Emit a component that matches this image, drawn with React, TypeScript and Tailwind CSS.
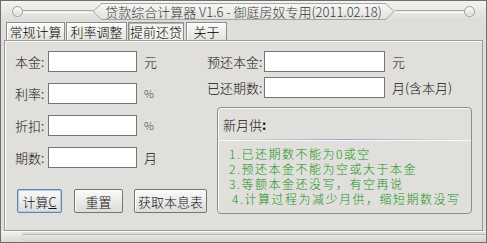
import React from "react";

const font = "font-['Noto_Sans_CJK_SC','Noto_Sans',sans-serif]";

function Circle() {
  return (
    <div className="w-[11px] h-[11px] rounded-full border border-[#9c9c9c] bg-gradient-to-b from-[#ffffff] to-[#d6d6d3] shrink-0 shadow-[inset_0_0_0_1px_#f4f4f4]" />
  );
}

function TitleLine() {
  return <div className="flex-1 h-[3px] border-t border-t-[#a9a9a6] border-b border-b-[#fbfbfa]" />;
}

function Tab({ label, w, active }: { label: string; w: string; active?: boolean }) {
  return (
    <div
      className={
        "h-[18px] border border-[#8c8c8a] border-b-0 flex items-center justify-center text-[13px] leading-none text-black " +
        w +
        (active
          ? " bg-[#f1f1ef] shadow-[inset_1px_1px_0_#b9b9b6]"
          : " bg-gradient-to-b from-[#fbfbfa] to-[#e2e1dd] shadow-[inset_1px_1px_0_#ffffff]")
      }
    >
      {label}
    </div>
  );
}

function Field({ label, unit, unitClass }: { label: string; unit: string; unitClass?: string }) {
  return (
    <div className="h-[21px] flex items-center">
      <div className="w-[33px] text-[13px] leading-none">{label}</div>
      <div className="w-[89px] h-[21px] bg-white border border-[#767676]" />
      <div className={"ml-[7px] leading-none " + (unitClass ?? "text-[13px]")}>{unit}</div>
    </div>
  );
}

function RField({ label, unit }: { label: string; unit: string }) {
  return (
    <div className="h-[21px] flex items-center">
      <div className="w-[57px] text-[13px] leading-none whitespace-nowrap">{label}</div>
      <div className="w-[121px] h-[21px] bg-white border border-[#767676]" />
      <div className="ml-[7px] text-[13px] leading-none whitespace-nowrap">{unit}</div>
    </div>
  );
}

function Btn({ children, w, focus }: { children: React.ReactNode; w: string; focus?: boolean }) {
  return (
    <div
      className={
        "h-[24px] rounded-[2px] border flex items-center justify-center text-[13px] leading-none bg-gradient-to-b from-[#fafafa] to-[#dcdcda] " +
        w +
        (focus
          ? " border-[#5f84ad] shadow-[inset_0_0_0_1px_#b5cce4]"
          : " border-[#747474] shadow-[inset_1px_1px_0_#ffffff]")
      }
    >
      {children}
    </div>
  );
}

export default function App() {
  return (
    <div
      className={
        "w-[487px] h-[243px] overflow-hidden bg-[#dfdedb] flex flex-col border border-[#6e6e6e] text-[#111] font-light " + font
      }
    >
      {/* Title bar */}
      <div className="h-[20px] shrink-0 flex items-center px-[11px] bg-gradient-to-b from-[#f3f3f1] to-[#dddcd8]">
        <Circle />
        <TitleLine />
        <div className="w-[302px] h-[17px] mt-[1px] bg-[#a5a5a2] p-[1px] [clip-path:polygon(9px_0,calc(100%-9px)_0,100%_50%,calc(100%-9px)_100%,9px_100%,0_50%)]">
          <div className="w-full h-full bg-gradient-to-b from-[#f6f6f4] to-[#e3e2de] flex items-center justify-center text-[13px] leading-none text-[#3a3a3a] whitespace-nowrap [clip-path:polygon(8px_0,calc(100%-8px)_0,100%_50%,calc(100%-8px)_100%,8px_100%,0_50%)]">
            贷款综合计算器 V1.6 - 御庭房奴专用(2011.02.18)
          </div>
        </div>
        <TitleLine />
        <Circle />
      </div>

      {/* Tabs */}
      <div className="h-[19px] shrink-0 flex items-end pl-[5px] gap-[1px]">
        <Tab label="常规计算" w="w-[59px]" />
        <Tab label="利率调整" w="w-[61px]" />
        <Tab label="提前还贷" w="w-[56px]" active />
        <div className="ml-[1px]">
          <Tab label="关于" w="w-[41px]" />
        </div>
      </div>

      {/* Panel */}
      <div className="mx-[3px] h-[191px] shrink-0 border border-[#9a9a97] shadow-[inset_1px_1px_0_#fbfbfa] bg-[#e0dfdb] flex pt-[10px]">
        {/* Left column */}
        <div className="w-[202px] pl-[10px] flex flex-col">
          <div className="flex flex-col gap-[11px]">
            <Field label="本金:" unit="元" />
            <Field label="利率:" unit="%" unitClass="text-[11px] text-[#444]" />
            <Field label="折扣:" unit="%" unitClass="text-[11px] text-[#444]" />
            <Field label="期数:" unit="月" />
          </div>
          <div className="mt-[21px] ml-[2px] flex">
            <Btn w="w-[47px]" focus>
              计算<span className="underline">C</span>
            </Btn>
            <div className="ml-[12px]">
              <Btn w="w-[49px]">重置</Btn>
            </div>
            <div className="ml-[11px]">
              <Btn w="w-[73px]">获取本息表</Btn>
            </div>
          </div>
        </div>

        {/* Right column */}
        <div className="flex flex-col">
          <div className="flex flex-col gap-[5px]">
            <RField label="预还本金:" unit="元" />
            <RField label="已还期数:" unit="月(含本月)" />
          </div>
          <div className="ml-[10px] mt-[9px] w-[255px] h-[107px] border border-[#8e8e8b] rounded-[4px] shadow-[inset_1px_1px_0_#f7f7f5] flex flex-col">
            <div className="pt-[8px] pl-[5px] text-[13px] leading-[18px]">
              新月供<span className="font-bold">:</span>
            </div>
            <div className="mt-[5px] h-[1px] bg-gradient-to-r from-[#e0dfdb] via-[#8eaad2] to-[#e0dfdb]" />
            <div className="h-[1px] bg-[#f8f8f6]" />
            <div className="mt-[5px] pl-[11px] text-[12px] tracking-[1.5px] text-[#17921a] whitespace-nowrap flex flex-col">
              <div className="h-[15px] leading-[15px] overflow-hidden">1.已还期数不能为0或空</div>
              <div className="h-[15px] leading-[15px] overflow-hidden">2.预还本金不能为空或大于本金</div>
              <div className="h-[15px] leading-[15px] overflow-hidden">3.等额本金还没写，有空再说</div>
              <div className="h-[15px] leading-[15px] overflow-hidden pl-[3px]">4.计算过程为减少月供，缩短期数没写</div>
            </div>
          </div>
        </div>
      </div>

      {/* Bottom strip */}
      <div className="flex-1 flex border-t border-t-[#fafaf8]">
        <div className="w-[22px] h-full bg-gradient-to-b from-[#f0f0ee] to-[#d9d8d4] [clip-path:polygon(0_0,100%_0,70%_100%,0_100%)]" />
        <div className="flex-1 mt-[2px] border-t border-t-[#b4b4b1] bg-gradient-to-b from-[#e6e5e2] to-[#d4d3cf]" />
      </div>
    </div>
  );
}
